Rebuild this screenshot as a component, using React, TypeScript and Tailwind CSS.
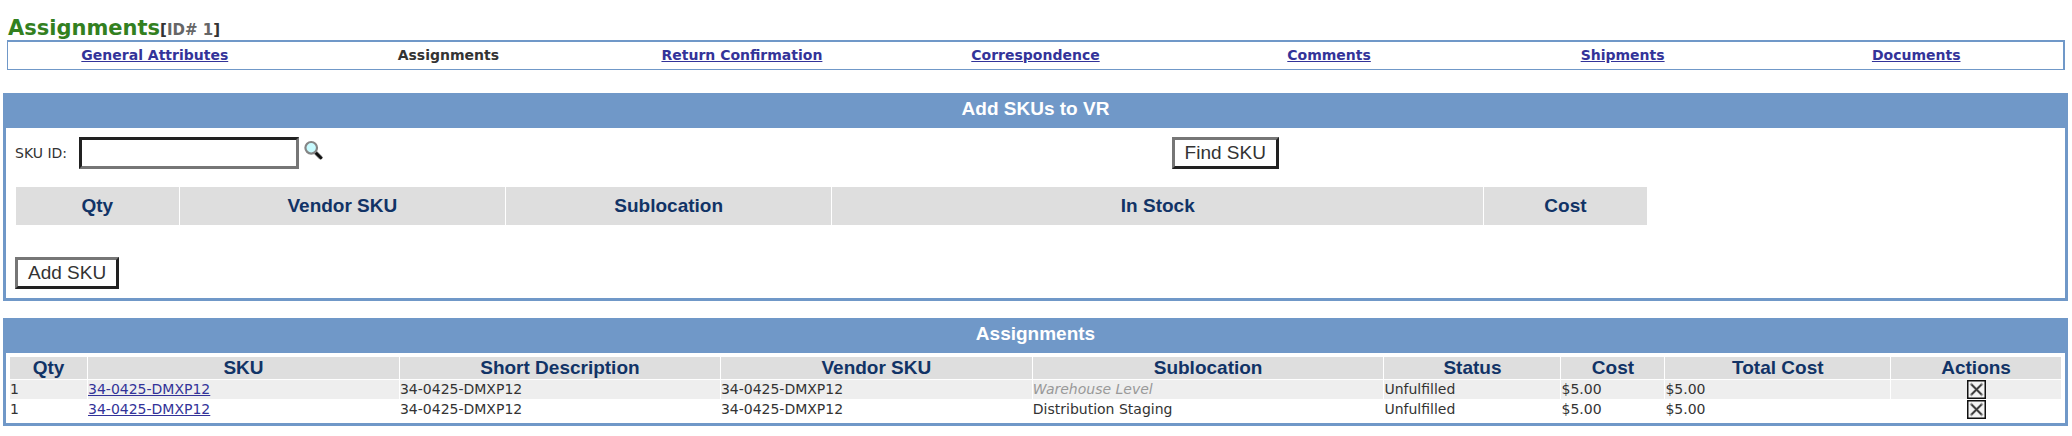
import { useState } from "react";
import type { ReactNode } from "react";

interface Assignment {
  qty: number;
  sku: string;
  description: string;
  vendorSku: string;
  sublocation: string | null;
  status: string;
  cost: string;
  totalCost: string;
}

const tabs = [
  "General Attributes",
  "Assignments",
  "Return Confirmation",
  "Correspondence",
  "Comments",
  "Shipments",
  "Documents",
];

const skuColumns = [
  { label: "Qty", width: "w-[10%]" },
  { label: "Vendor SKU", width: "w-[20%]" },
  { label: "Sublocation", width: "w-[20%]" },
  { label: "In Stock", width: "w-[40%]" },
  { label: "Cost", width: "w-[10%]" },
];

const assignmentColumns = [
  { label: "Qty", width: "w-[3.77%]" },
  { label: "SKU", width: "w-[15.22%]" },
  { label: "Short Description", width: "w-[15.66%]" },
  { label: "Vendor SKU", width: "w-[15.22%]" },
  { label: "Sublocation", width: "w-[17.16%]" },
  { label: "Status", width: "w-[8.62%]" },
  { label: "Cost", width: "w-[5.04%]" },
  { label: "Total Cost", width: "w-[11%]" },
  { label: "Actions", width: "w-[8.31%]" },
];

const assignments: Assignment[] = [
  {
    qty: 1,
    sku: "34-0425-DMXP12",
    description: "34-0425-DMXP12",
    vendorSku: "34-0425-DMXP12",
    sublocation: null,
    status: "Unfulfilled",
    cost: "$5.00",
    totalCost: "$5.00",
  },
  {
    qty: 1,
    sku: "34-0425-DMXP12",
    description: "34-0425-DMXP12",
    vendorSku: "34-0425-DMXP12",
    sublocation: "Distribution Staging",
    status: "Unfulfilled",
    cost: "$5.00",
    totalCost: "$5.00",
  },
];

const SearchIcon = () => (
  <svg viewBox="0 0 20 20" className="h-5 w-5">
    <path d="M11.5 11.5 L18 18" stroke="#a8a8a8" strokeWidth="4.5" />
    <path d="M12.5 12.5 L18.8 18.8" stroke="#111111" strokeWidth="3" />
    <circle cx="8.2" cy="7.8" r="5.8" fill="#c8fbff" stroke="#858585" strokeWidth="2.2" />
  </svg>
);

const DeleteIcon = () => (
  <svg viewBox="0 0 19 19" className="h-[19px] w-[19px]">
    <rect x="0.75" y="0.75" width="17.5" height="17.5" fill="#f4f4f4" stroke="#111111" strokeWidth="1.5" />
    <path d="M3.5 3.5 L15.5 15.5 M15.5 3.5 L3.5 15.5" stroke="#a0a0a0" strokeWidth="2.6" />
    <path d="M4.5 4.5 L14.5 14.5 M14.5 4.5 L4.5 14.5" stroke="#333333" strokeWidth="1.5" />
  </svg>
);

const Panel = ({ title, children }: { title: string; children: ReactNode }) => (
  <section className="border-3 border-[#7098c8]">
    <h2 className="bg-[#7098c8] pt-0.5 pb-2 text-center font-['Liberation_Sans',sans-serif] text-[19px] leading-[22px] font-bold text-white">
      {title}
    </h2>
    {children}
  </section>
);

const Button = ({ children }: { children: ReactNode }) => (
  <button
    type="button"
    className="h-8 border-3 border-t-[#767676] border-r-[#212121] border-b-[#212121] border-l-[#767676] bg-white px-2.5 font-['Liberation_Sans',sans-serif] text-[19px] leading-6 text-[#333333]"
  >
    {children}
  </button>
);

const headerCell =
  "bg-[#dedede] p-0 text-center font-['Liberation_Sans',sans-serif] text-[19px] leading-[22px] font-bold text-[#113366]";

export default function App() {
  const [skuId, setSkuId] = useState("");

  return (
    <div className="bg-white pt-4 pr-1 pb-2.5 pl-[3px] font-['DejaVu_Sans',sans-serif] text-[14px] text-[#333333]">
      <header className="mr-[3px] ml-1">
        <h1 className="pl-px text-[21px] leading-6 font-bold text-[#33801f]">
          Assignments
          <span className="text-[15px] leading-none text-[#333333]">
            [<span className="text-[#666666]">ID# 1</span>]
          </span>
        </h1>
        <nav className="grid grid-cols-7 border border-t-2 border-r-2 border-[#7098c8] py-1 text-center leading-[19px] font-bold">
          {tabs.map((tab) =>
            tab === "Assignments" ? (
              <span key={tab}>{tab}</span>
            ) : (
              <a key={tab} href="#" className="text-[#333399] underline">
                {tab}
              </a>
            )
          )}
        </nav>
      </header>

      <main className="mt-[23px] flex flex-col gap-[17px]">
        <Panel title="Add SKUs to VR">
          <div className="px-[9px] py-[9px]">
            <div className="grid grid-cols-[17fr_13fr]">
              <div className="flex items-center">
                <label htmlFor="sku-id" className="w-16">
                  SKU ID:
                </label>
                <input
                  id="sku-id"
                  type="text"
                  value={skuId}
                  onChange={(e) => setSkuId(e.target.value)}
                  className="h-8 w-[220px] border-3 border-t-[#212121] border-r-[#767676] border-b-[#767676] border-l-[#212121] bg-white px-1 font-['Liberation_Sans',sans-serif] text-[19px]"
                />
                <button type="button" aria-label="Search SKUs" className="ml-1 self-start pt-[3px]">
                  <SearchIcon />
                </button>
              </div>
              <div>
                <Button>Find SKU</Button>
              </div>
            </div>

            {/* SKU search results */}
            <table className="mt-[17px] w-[80%] table-fixed border-separate border-spacing-px">
              <thead>
                <tr className="h-[38px]">
                  {skuColumns.map((col) => (
                    <th key={col.label} className={`${headerCell} ${col.width}`}>
                      {col.label}
                    </th>
                  ))}
                </tr>
              </thead>
            </table>

            <div className="mt-[31px]">
              <Button>Add SKU</Button>
            </div>
          </div>
        </Panel>

        <Panel title="Assignments">
          <div className="p-[3px]">
            <table className="w-full table-fixed border-separate border-spacing-px leading-[19px]">
              <thead>
                <tr>
                  {assignmentColumns.map((col) => (
                    <th key={col.label} className={`${headerCell} ${col.width}`}>
                      {col.label}
                    </th>
                  ))}
                </tr>
              </thead>
              <tbody>
                {assignments.map((row, index) => (
                  <tr key={index} className="[&>td]:p-0 odd:[&>td]:bg-[#eeeeee]">
                    <td>{row.qty}</td>
                    <td>
                      <a href="#" className="text-[#333399] underline">
                        {row.sku}
                      </a>
                    </td>
                    <td>{row.description}</td>
                    <td>{row.vendorSku}</td>
                    <td>
                      {row.sublocation ?? (
                        <em className="text-[#999999]">Warehouse Level</em>
                      )}
                    </td>
                    <td>{row.status}</td>
                    <td>{row.cost}</td>
                    <td>{row.totalCost}</td>
                    <td>
                      <button type="button" aria-label="Remove assignment" className="mx-auto block">
                        <DeleteIcon />
                      </button>
                    </td>
                  </tr>
                ))}
              </tbody>
            </table>
          </div>
        </Panel>
      </main>
    </div>
  );
}
